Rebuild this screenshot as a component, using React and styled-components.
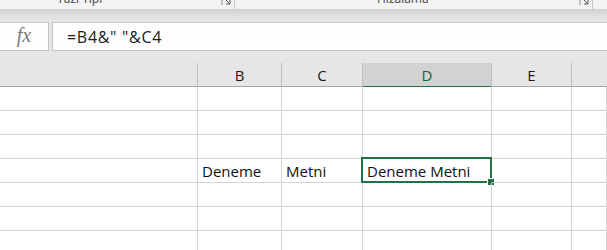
import React from 'react';
import styled, { createGlobalStyle } from 'styled-components';

const GlobalStyle = createGlobalStyle`
  html, body {
    margin: 0;
    padding: 0;
    background: #e6e6e6;
    overflow: hidden;
  }
  body {
    font-family: "Open Sans", "Noto Sans", sans-serif;
  }
`;

const COLS = '198px 84px 81px 129px 80px 1fr';

const Window = styled.div`
  width: 607px;
  height: 250px;
  display: flex;
  flex-direction: column;
  overflow: hidden;
  background: #e6e6e6;
`;

const Ribbon = styled.div`
  height: 9px;
  flex: none;
  display: flex;
  overflow: hidden;
  background: #f3f3f3;
`;

const RibbonGroup = styled.div`
  width: ${({ $w }) => $w}px;
  flex: none;
  display: flex;
  align-items: flex-start;
  box-sizing: border-box;
  border-right: 1px solid #c8c8c8;
  padding-left: ${({ $pl }) => $pl}px;
  padding-right: 2px;
`;

const GroupLabel = styled.span`
  margin-top: -8px;
  font-size: 12px;
  line-height: 14px;
  color: #444;
  white-space: nowrap;
`;

const Launcher = styled.svg`
  margin-left: auto;
  margin-top: -5px;
  flex: none;
`;

const Band = styled.div`
  height: 13px;
  flex: none;
  background: linear-gradient(#d2d2d2, #e3e3e3 70%, #e6e6e6);
`;

const FormulaRow = styled.div`
  height: 29px;
  flex: none;
  display: flex;
  gap: 3px;
`;

const FxBox = styled.div`
  width: 49px;
  box-sizing: border-box;
  display: flex;
  align-items: center;
  justify-content: center;
  background: #fdfdfd;
  border: 1px solid #c6c6c6;
  border-left: none;
  font-family: "Liberation Serif", serif;
  font-style: italic;
  font-size: 20px;
  color: #7a7a7a;
  padding-bottom: 2px;
`;

const FormulaInput = styled.div`
  flex: 1;
  box-sizing: border-box;
  display: flex;
  align-items: center;
  padding-left: 14px;
  background: #fdfdfd;
  border: 1px solid #c6c6c6;
  border-right: none;
  font-size: 16px;
  letter-spacing: 0.7px;
  color: #1a1a1a;
`;

const Spacer = styled.div`
  height: 12px;
  flex: none;
`;

const HeaderRow = styled.div`
  display: grid;
  grid-template-columns: ${COLS};
  height: 24px;
  flex: none;
  box-sizing: border-box;
  border-bottom: 1px solid #a5a5a5;
`;

const HeadCell = styled.div`
  box-sizing: border-box;
  border-right: 1px solid ${({ $last }) => ($last ? 'transparent' : '#bdbdbd')};
  background: ${({ $active }) => ($active ? '#d2d2d2' : 'transparent')};
  box-shadow: ${({ $active }) => ($active ? 'inset 0 -2px 0 #217346' : 'none')};
  margin-bottom: ${({ $active }) => ($active ? '-1px' : '0')};
  text-align: center;
  font-size: 15px;
  line-height: 23px;
  padding-top: 1px;
  color: ${({ $active }) => ($active ? '#1d5f3b' : '#1a1a1a')};
`;

const Sheet = styled.div`
  flex: 1;
  overflow: hidden;
  background: #fff;
`;

const Row = styled.div`
  display: grid;
  grid-template-columns: ${COLS};
  height: 24px;
`;

const Cell = styled.div`
  position: relative;
  box-sizing: border-box;
  border-right: 1px solid #d4d4d4;
  border-bottom: 1px solid #d4d4d4;
  display: flex;
  align-items: flex-end;
  padding: 0 0 1px 4px;
  font-size: 15px;
  line-height: 20px;
  color: #111;
  white-space: nowrap;
`;

const Selection = styled.div`
  position: absolute;
  top: -2px;
  left: -2px;
  right: -1px;
  bottom: -1px;
  border: 2px solid #217346;
  pointer-events: none;
`;

const FillHandle = styled.div`
  position: absolute;
  right: -4px;
  bottom: -4px;
  width: 6px;
  height: 6px;
  background: #217346;
  border: 1px solid #fff;
  border-right: none;
  border-bottom: none;
`;

const LauncherIcon = () => (
  <Launcher width="11" height="11" viewBox="0 0 11 11">
    <path d="M1 10V1h9" fill="none" stroke="#888" strokeWidth="1" />
    <path d="M3.5 3.5l5 5M9 5v4H5" fill="none" stroke="#555" strokeWidth="1" />
  </Launcher>
);

const columns = ['', 'B', 'C', 'D', 'E', ''];

const rows = [
  {},
  {},
  {},
  { b: 'Deneme', c: 'Metni', d: 'Deneme Metni', selected: true },
  {},
  {},
  {},
];

export default function App() {
  return (
    <Window>
      <GlobalStyle />
      <Ribbon>
        <RibbonGroup $w={235} $pl={57}>
          <GroupLabel>Yazı Tipi</GroupLabel>
          <LauncherIcon />
        </RibbonGroup>
        <RibbonGroup $w={358} $pl={142}>
          <GroupLabel>Hizalama</GroupLabel>
          <LauncherIcon />
        </RibbonGroup>
      </Ribbon>
      <Band />
      <FormulaRow>
        <FxBox>fx</FxBox>
        <FormulaInput>=B4&amp;" "&amp;C4</FormulaInput>
      </FormulaRow>
      <Spacer />
      <HeaderRow>
        {columns.map((c, i) => (
          <HeadCell key={i} $active={c === 'D'} $last={i === columns.length - 1}>
            {c}
          </HeadCell>
        ))}
      </HeaderRow>
      <Sheet>
        {rows.map((r, i) => (
          <Row key={i}>
            <Cell />
            <Cell>{r.b}</Cell>
            <Cell>{r.c}</Cell>
            <Cell>
              {r.d}
              {r.selected && (
                <Selection>
                  <FillHandle />
                </Selection>
              )}
            </Cell>
            <Cell />
            <Cell />
          </Row>
        ))}
      </Sheet>
    </Window>
  );
}
